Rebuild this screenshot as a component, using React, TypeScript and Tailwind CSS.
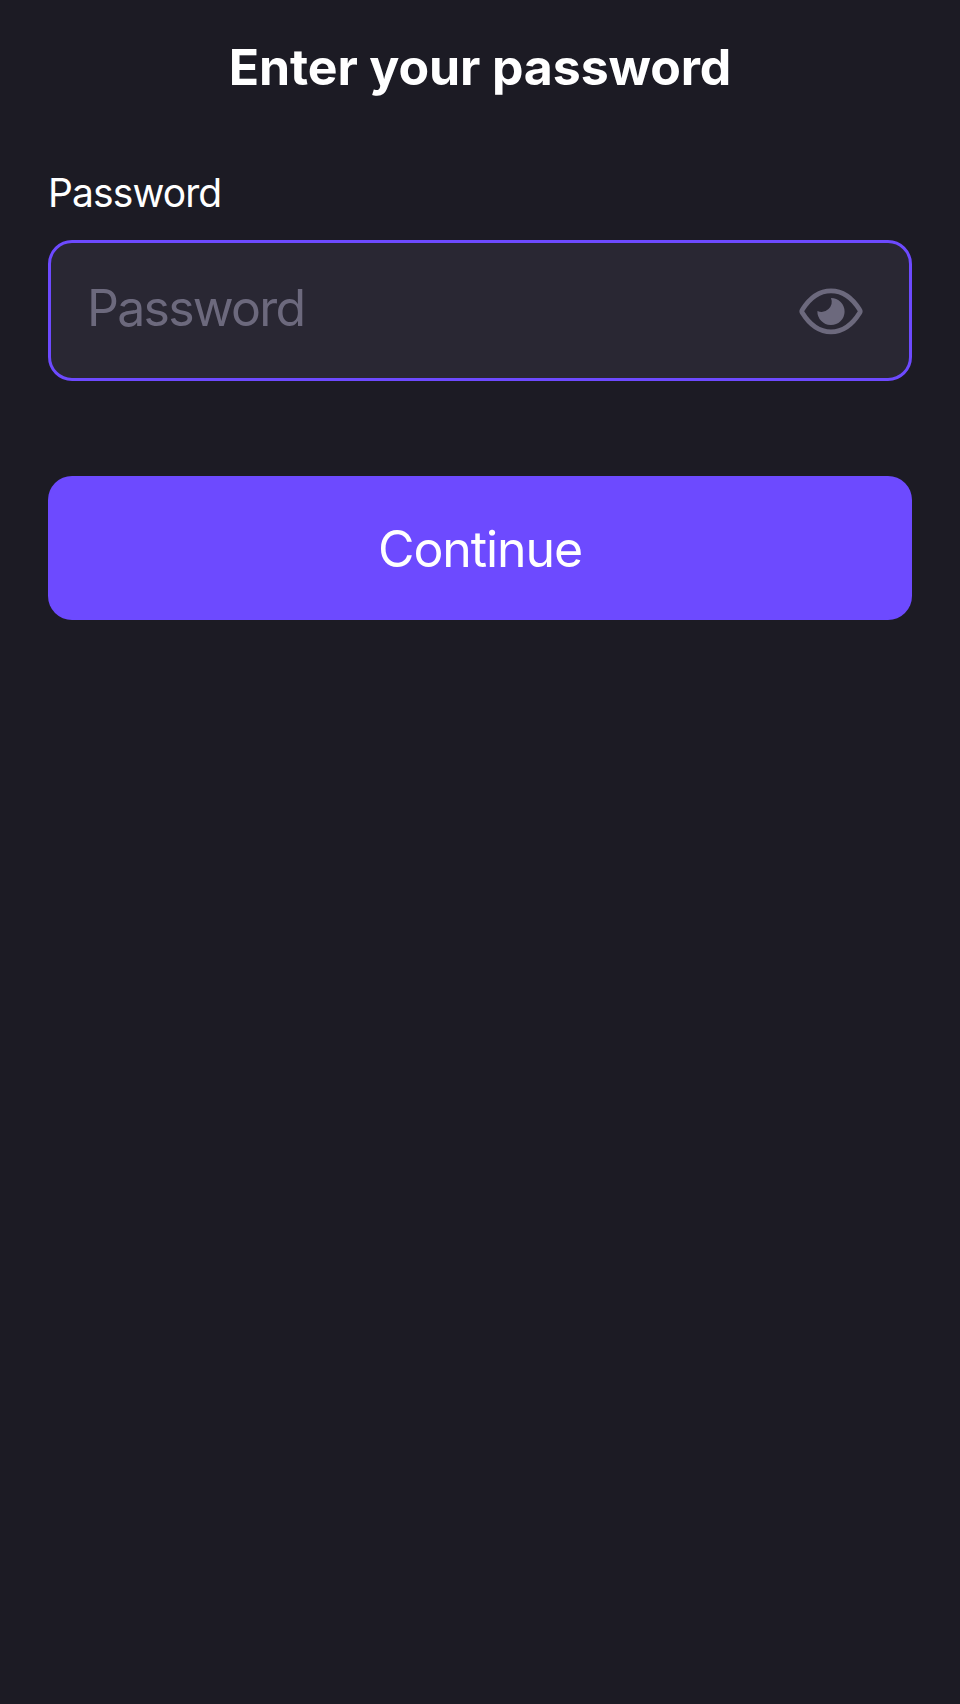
export default function App() {
  return (
    <main className="min-h-[1704px] bg-[#1c1b24] px-12 pt-[37px] font-['Inter',sans-serif] text-white">
      <h1 className="text-center text-[50px] font-bold leading-[60px] tracking-[-0.12px]">Enter your password</h1>
      <label htmlFor="password" className="mt-[72px] block text-[39px] leading-[48px] tracking-[-0.9px]">Password</label>
      <div className="mt-[23px] flex h-[141px] items-center justify-between rounded-3xl border-[3px] border-[#6d4aff] bg-[#292733] pl-9 pr-[46px]">
        <input id="password" type="password" placeholder="Password" className="mb-[5px] w-[400px] bg-transparent text-[50px] leading-[60px] tracking-[-1.75px] outline-none placeholder:text-[#6c697d]" />
        <svg viewBox="0 0 64 48" className="h-12 w-16" fill="none">
          <path d="M3.300 22.800C11 10.500 20 3.900 32 3.900S53 10.500 60.700 22.800Q61.700 24.300 60.700 25.800C53 38.300 44 44.900 32 44.900S11 38.300 3.300 25.800Q2.300 24.300 3.300 22.800Z" stroke="#6c697d" strokeWidth="4.800" strokeLinejoin="round" />
          <path d="M32 10.900A13.600 13.600 0 1 1 18.400 24A10.300 10.300 0 0 0 32 10.900Z" fill="#6c697d" />
        </svg>
      </div>
      <button className="mt-[95px] h-[144px] w-full rounded-3xl bg-[#6d4aff] pt-[2px] text-[50px] tracking-[-1.1px]">Continue</button>
    </main>
  );
}
